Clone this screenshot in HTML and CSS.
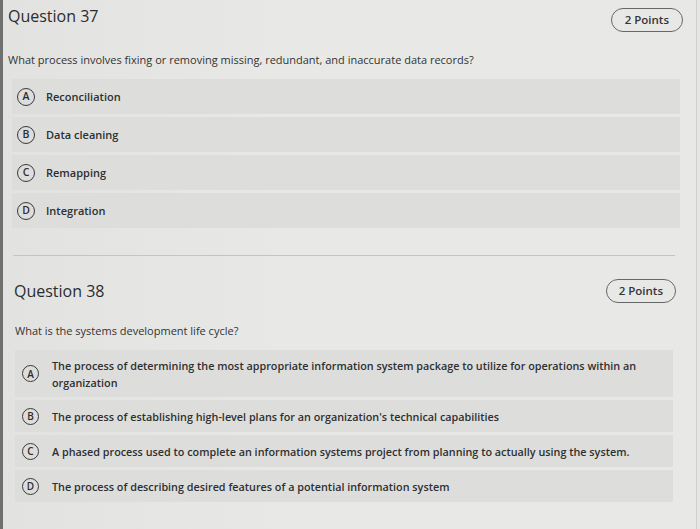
FILE: index.html
```html
<!DOCTYPE html>
<html>
<head>
<meta charset="utf-8">
<link rel="stylesheet" href="styles.css">
</head>
<body>
<div class="page">
  <section class="question q37">
    <div class="q-head">
      <h2 class="q-title">Question 37</h2>
      <span class="points">2 Points</span>
    </div>
    <p class="q-text">What process involves fixing or removing missing, redundant, and inaccurate data records?</p>
    <ul class="options">
      <li class="option"><span class="letter">A</span><span class="opt-text">Reconciliation</span></li>
      <li class="option"><span class="letter">B</span><span class="opt-text">Data cleaning</span></li>
      <li class="option"><span class="letter">C</span><span class="opt-text">Remapping</span></li>
      <li class="option"><span class="letter">D</span><span class="opt-text">Integration</span></li>
    </ul>
  </section>
  <hr class="divider">
  <section class="question q38">
    <div class="q-head">
      <h2 class="q-title">Question 38</h2>
      <span class="points">2 Points</span>
    </div>
    <p class="q-text">What is the systems development life cycle?</p>
    <ul class="options">
      <li class="option tall"><span class="letter">A</span><span class="opt-text">The process of determining the most appropriate information system package to utilize for operations within an organization</span></li>
      <li class="option"><span class="letter">B</span><span class="opt-text">The process of establishing high-level plans for an organization's technical capabilities</span></li>
      <li class="option"><span class="letter">C</span><span class="opt-text">A phased process used to complete an information systems project from planning to actually using the system.</span></li>
      <li class="option"><span class="letter">D</span><span class="opt-text">The process of describing desired features of a potential information system</span></li>
    </ul>
  </section>
</div>
</body>
</html>
```

FILE: styles.css
```css
* { box-sizing: border-box; }
html, body { margin: 0; padding: 0; }
body {
  background: #e6e7e5;
  font-family: "Open Sans", "Noto Sans", sans-serif;
  color: #2e2f30;
  width: 700px;
  height: 529px;
  overflow: hidden;
}
.page {
  width: 697px;
  height: 529px;
  border-left: 3px solid #6e6f6e;
  border-right: 1px solid #cfd0ce;
  background: linear-gradient(90deg, #e2e3e1 0%, #e8e9e7 40%, #e8e9e7 100%);
}
.question { display: flex; flex-direction: column; }
.q37 { padding: 5px 0 27px 5px; }
.q38 { padding: 23px 0 0 11px; }
.q-head {
  display: flex;
  justify-content: space-between;
  align-items: flex-start;
}
.q37 .q-head { margin-right: 13px; }
.q37 .points { margin-top: 3px; }
.q38 .q-head { margin-right: 20px; }
.q38 .q-title { margin-top: 1px; }
.q-title {
  margin: 0;
  font-size: 16px;
  line-height: 22px;
  font-weight: 400;
  color: #2b2c2d;
}
.points {
  display: block;
  height: 24px;
  border: 1px solid #666767;
  border-radius: 12px;
  padding: 0 13px;
  font-size: 11.5px;
  line-height: 22px;
  font-weight: 600;
  color: #333;
}
.q38 .points { padding: 0 12px; }
.q-text {
  font-size: 11px;
  line-height: 15px;
  color: #333;
}
.q37 .q-text { margin: 20px 0 12px; }
.q38 .q-text { margin: 20px 0 12px 1px; }
.options {
  list-style: none;
  margin: 0;
  padding: 0;
  display: flex;
  flex-direction: column;
  gap: 3px;
}
.q37 .options { margin: 0 16px 0 4px; }
.q38 .options { margin: 0 23px 0 1px; }
.option {
  display: flex;
  align-items: center;
  background: #dddedc;
}
.q37 .option { height: 35px; padding-left: 5px; gap: 11px; }
.q38 .option { height: 32px; padding-left: 7px; gap: 13px; }
.q38 .option.tall { height: 47px; }
.letter {
  flex: none;
  width: 18px;
  height: 18px;
  border: 1.4px solid #38393a;
  border-radius: 50%;
  display: flex;
  align-items: center;
  justify-content: center;
  font-size: 10.5px;
  line-height: 1;
  font-weight: 600;
  color: #2b2c2d;
}
.q38 .letter { width: 17px; height: 17px; font-size: 10px; }
.opt-text {
  font-weight: 600;
  line-height: 17px;
  color: #2e2f30;
}
.q37 .opt-text { font-size: 11px; }
.q38 .opt-text { font-size: 10.8px; }
.divider {
  margin: 0 21px 0 10px;
  border: none;
  border-top: 1px solid #c4c5c3;
}
```
